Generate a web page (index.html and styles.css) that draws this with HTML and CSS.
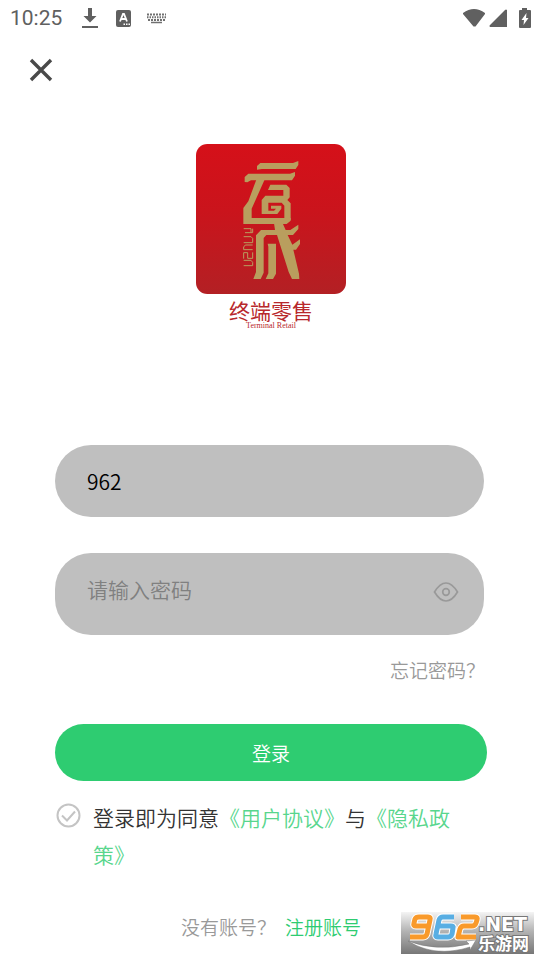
FILE: index.html
```html
<!DOCTYPE html>
<html lang="zh-CN">
<head>
<meta charset="utf-8">
<meta name="viewport" content="width=device-width, initial-scale=1">
<title>登录</title>
<link rel="stylesheet" href="styles.css">
</head>
<body>
<header class="status">
  <span class="clock">10:25</span>
  <svg class="download" width="16" height="22" viewBox="0 0 16 22" fill="#606060" aria-hidden="true"><path d="M6 1h4v8h4.500L8 15.500 1.500 9H6zM0 19h16v2H0z"/></svg>
  <svg class="app" width="15" height="17" viewBox="0 0 15 17" aria-hidden="true"><rect width="15" height="17" rx="2" fill="#606060"/><path d="M4 11.500 7 4h1l3 7.500M5.200 9h4.600" fill="none" stroke="#fff" stroke-width="1.800"/><path d="M7.500 13.500h1.500v1.500H7.500zM10 13.500h1.500v1.500H10zM12.500 13.500H14v1.500h-1.500z" fill="#fff"/></svg>
  <svg class="keyboard" width="19" height="11" viewBox="0 0 19 11" fill="none" stroke="#707070" aria-hidden="true"><path d="M0 1.500h19M1 7h17" stroke-width="2" stroke-dasharray="2 1"/><path d="M0 4.300h19" stroke-width="2" stroke-dasharray="1.500 1"/><path d="M4 9.500h11" stroke-width="1.500"/></svg>
  <svg class="signals" width="68" height="20" viewBox="0 0 68 20" fill="#606060" aria-hidden="true"><path d="M0 5Q11-3 22 5v1L12.500 18.500h-2L0 6zM44 2v17H27q-1-1 0-2L42 2q1-1 2 0zM59 0h5v2h3q1 0 1 1v16q0 1-1 1H57q-1 0-1-1V3q0-1 1-1h2z"/><path d="m63.500 5-5 7H61l-.5 5 5-7H63z" fill="#fff"/></svg>
</header>
<main class="page">
  <button class="close" type="button" aria-label="关闭"><svg width="24" height="24" viewBox="0 0 24 24" fill="none" stroke="#494949" stroke-width="3.400"><path d="m2 2 20 20M22 2 2 22"/></svg></button>
  <section class="brand">
    <svg class="emblem" width="150" height="150" viewBox="0 0 450 450" role="img" aria-label="云成">
      <defs><linearGradient id="red" x2="0" y2="1"><stop stop-color="#d51019"/><stop offset=".45" stop-color="#ca141c"/><stop offset="1" stop-color="#b32024"/></linearGradient></defs>
      <rect width="450" height="450" rx="34" fill="url(#red)"/>
      <g transform="translate(-18 -18)" fill="#b99e5e">
        <path d="M201 95V84l10-9h98l16-6v12l-8 12H216zM164 132v-15l11-10h125l15-5v11l-9 14H183l-11 6z"/>
        <path d="M200 122h25l-40 90v28h117v8l-12 10H160v-48l15-20z"/>
        <path d="M241 140h48l10 10v28l-7 8 10 10v50h-19v-43l-8-9h-40v24h17l6-6h-15v-9h31v9l-12 16h-47v-42l11-13h54v-17h-46z"/>
        <path d="M252 256h26l9 20h14l24-16v13l-16 18h-16l14 29 23-16v14l-12 17h-8l17 72 1 16h-22l-10-21-35-111h-32l-8 9v104l-9 19h-22l8-21V292l15-16h42z"/>
        <path d="M233 317h25v90l-9 16h-22l8-17v-80z"/>
      </g>
      <path d="M143 254h22v12h-18M165 266h5v-12M143 278h22l5 5v13h-27M170 303h-22l-5 6v8h27M143 344v-18h12v17h15v-18M143 349h22l5 6v10h-27" fill="none" stroke="#b99e5e" stroke-width="3"/>
    </svg>
    <div class="slogan">终端零售</div>
    <div class="slogan-en">Terminal Retail</div>
  </section>
  <form class="form">
    <label class="field"><input type="text" value="962" aria-label="账号"></label>
    <div class="field password">
      <input type="password" placeholder="请输入密码" aria-label="密码">
      <button class="eye" type="button" aria-label="显示密码"><svg width="26" height="20" viewBox="0 0 26 20" fill="none" stroke="#999" stroke-width="1.700"><path d="M1.500 10Q7 1 13 1t11.500 9Q19 19 13 19T1.500 10z"/><circle cx="13" cy="10" r="3.300"/></svg></button>
    </div>
    <a class="forgot" href="#">忘记密码？</a>
    <button class="submit" type="submit">登录</button>
    <div class="agreement">
      <input type="checkbox" id="agree">
      <svg class="tick" width="25" height="25" viewBox="0 0 25 25" fill="none" stroke="#c4c4c4" stroke-width="2" aria-hidden="true"><circle cx="12.500" cy="12.500" r="11"/><path d="m6 12.500 5 5 8-9" /></svg>
      <label for="agree">登录即为同意<a href="#">《用户协议》</a>与<a href="#">《隐私政<wbr>策》</a></label>
    </div>
  </form>
  <p class="register"><span>没有账号？</span><a href="#">注册账号</a></p>
</main>
<svg class="watermark" width="133" height="42" viewBox="0 0 133 42" role="img" aria-label="962.NET 乐游网">
  <defs>
    <linearGradient id="gray" x2="0" y2="1"><stop stop-color="#f4f4f4"/><stop offset=".45" stop-color="#b4b4b4"/><stop offset="1" stop-color="#777"/></linearGradient>
  </defs>
  <rect width="133" height="42" fill="url(#gray)"/>
  <g fill="none" stroke-linejoin="round">
    <path stroke="#fff" stroke-width="7" d="M27 14H15q-3 0-2-3l1-4q1-2 4-2h9q3 0 2 3l-3 14q-1 3-4 3H9M53 5H42q-3 0-4 3l-3 14q-1 3 2 3h10q3 0 4-3l1-6q1-2-2-2H37M60 5h14q3 0 2 3l-1 3q-1 3-4 3h-8q-3 0-4 3l-2 8h18"/>
    <g stroke-width="5">
      <path stroke="#f99a2b" d="M27 14H15q-3 0-2-3l1-4q1-2 4-2h9q3 0 2 3l-3 14q-1 3-4 3H9"/>
      <path stroke="#58aee3" d="M53 5H42q-3 0-4 3l-3 14q-1 3 2 3h10q3 0 4-3l1-6q1-2-2-2H37"/>
      <path stroke="#f99a2b" d="M60 5h14q3 0 2 3l-1 3q-1 3-4 3h-8q-3 0-4 3l-2 8h18"/>
    </g>
  </g>
  <path d="M7 29q28 11 61 3l-3-3 10-1-6 10v-3Q34 46 7 29z" fill="#fff" stroke="#777" stroke-width=".5"/>
  <g class="mark-text"><text x="77" y="19" class="net">.NET</text><text x="77" y="38" class="site">乐游网</text></g>
</svg>
</body>
</html>
```
FILE: styles.css
```css
* { box-sizing: border-box; }
body {
  margin: 0;
  min-height: 100vh;
  position: relative;
  background: #fff;
  color: #333;
  font-family: "Noto Sans CJK SC", sans-serif;
  font-size: 21px;
  font-weight: 350;
}
button, input { font: inherit; border: 0; padding: 0; background: none; }
a { color: #2ecc71; text-decoration: none; }
svg { display: block; flex: none; }

.status {
  display: flex;
  align-items: center;
  height: 38px;
  padding: 0 9px 2px 10px;
  color: #606060;
}
.clock { font: 21px/24px Roboto, sans-serif; }
.download { margin-left: 20px; }
.app { margin-left: 18px; }
.keyboard { margin-left: 16px; }
.signals { margin-left: auto; }

.page { padding: 20px 53px 0 55px; }
.close { display: block; margin-left: -26px; }

.brand {
  display: flex;
  flex-direction: column;
  align-items: center;
  padding-top: 62px;
  color: #b8282c;
}
.slogan { margin-top: 4px; font-weight: 400; line-height: 24px; }
.slogan-en { font: 8px/8px "Liberation Serif", serif; }

.form {
  display: flex;
  flex-direction: column;
  margin-top: 115px;
}
.field {
  display: flex;
  align-items: center;
  height: 72px;
  margin-right: 3px;
  padding: 0 25px 0 32px;
  border-radius: 36px;
  background: #bfbfbf;
}
.field input { flex: 1; min-width: 0; height: 40px; outline: 0; color: #000; }
.field input::placeholder { color: #808080; opacity: 1; }
.password { height: 82px; margin-top: 36px; padding-bottom: 4px; }
.password input { padding-bottom: 6px; }
.forgot {
  align-self: flex-end;
  margin: 21px 2px 0 0;
  color: #999;
  font-size: 19px;
  line-height: 28px;
}
.submit {
  height: 57px;
  margin-top: 40px;
  border-radius: 29px;
  background: #2ecc71;
  color: #fff;
  font-size: 19px;
}
.agreement {
  display: flex;
  position: relative;
  margin-top: 18px;
  line-height: 37px;
}
.agreement input {
  position: absolute;
  width: 25px;
  height: 25px;
  margin: 0;
  opacity: 0;
}
.agreement a { color: #58d68d; }
.tick { margin: 4px 12px 0 1px; }
.register {
  display: flex;
  justify-content: center;
  gap: 9px;
  margin: 40px 0 0;
  color: #999;
  font-size: 19px;
  line-height: 28px;
}
.watermark { position: absolute; right: 6px; bottom: 6px; }
.mark-text { fill: #fff; stroke: #777; stroke-width: 2px; paint-order: stroke; }
.net { font: bold 19px "DejaVu Sans", sans-serif; }
.site { font: bold 17px "Noto Sans CJK SC", sans-serif; }
```
